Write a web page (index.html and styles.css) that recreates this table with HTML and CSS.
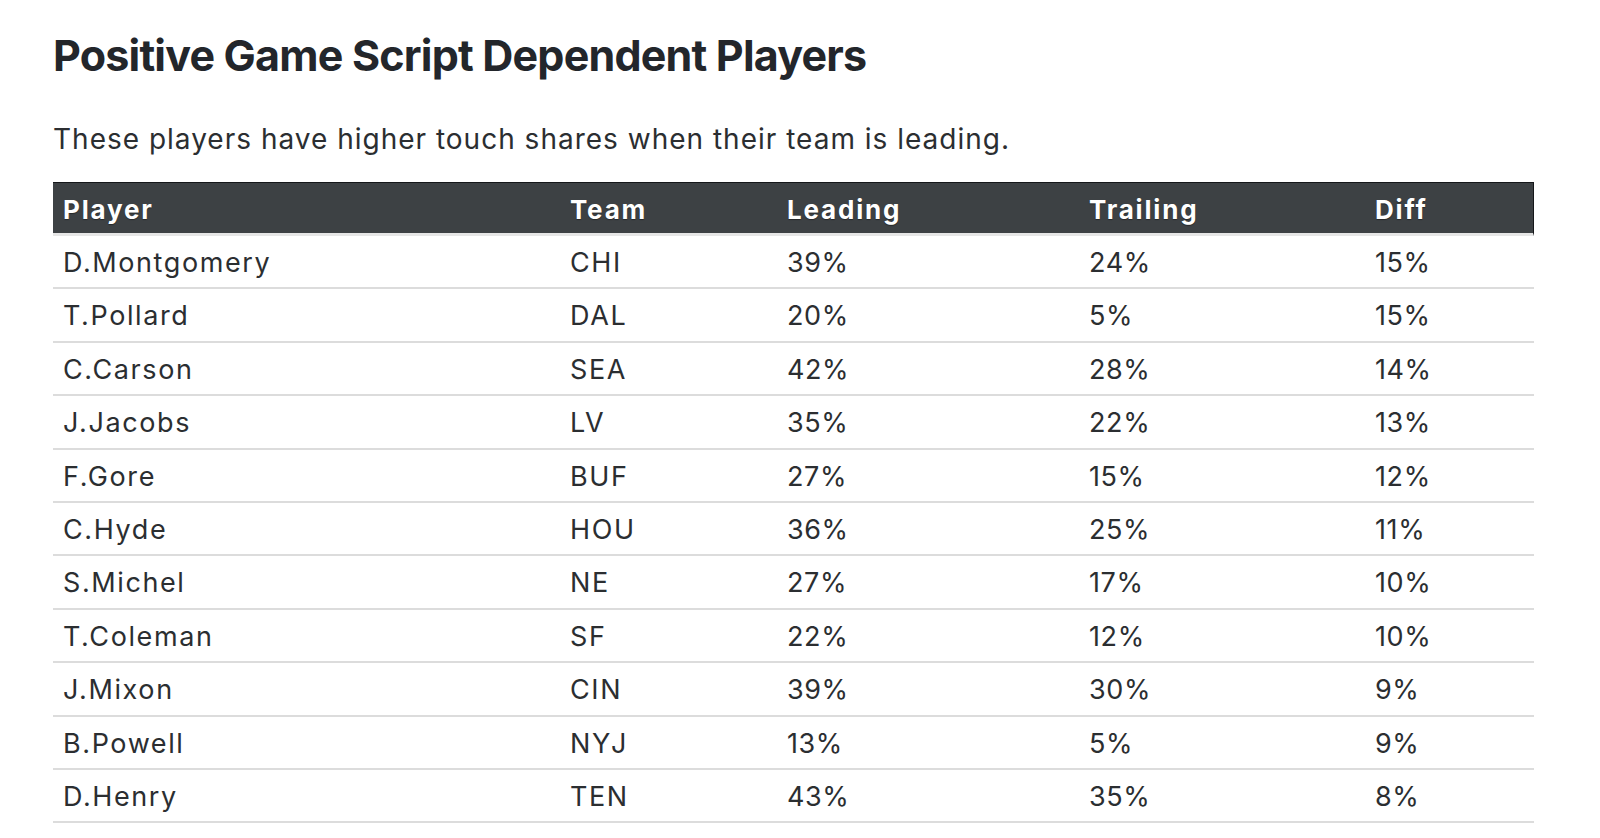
FILE: index.html
```html
<!DOCTYPE html>
<html lang="en">
<head>
<meta charset="utf-8">
<title>Positive Game Script Dependent Players</title>
<link rel="stylesheet" href="styles.css">
</head>
<body>
<main class="article">
  <h1 class="title">Positive Game Script Dependent Players</h1>
  <p class="lede">These players have higher touch shares when their team is leading.</p>
  <table class="stats">
    <colgroup>
      <col class="c-player"><col class="c-team"><col class="c-lead"><col class="c-trail"><col class="c-diff">
    </colgroup>
    <thead>
      <tr><th>Player</th><th>Team</th><th>Leading</th><th>Trailing</th><th>Diff</th></tr>
    </thead>
    <tbody>
      <tr><td class="name">D.Montgomery</td><td class="name">CHI</td><td>39%</td><td>24%</td><td>15%</td></tr>
      <tr><td class="name">T.Pollard</td><td class="name">DAL</td><td>20%</td><td>5%</td><td>15%</td></tr>
      <tr><td class="name">C.Carson</td><td class="name">SEA</td><td>42%</td><td>28%</td><td>14%</td></tr>
      <tr><td class="name">J.Jacobs</td><td class="name">LV</td><td>35%</td><td>22%</td><td>13%</td></tr>
      <tr><td class="name">F.Gore</td><td class="name">BUF</td><td>27%</td><td>15%</td><td>12%</td></tr>
      <tr><td class="name">C.Hyde</td><td class="name">HOU</td><td>36%</td><td>25%</td><td>11%</td></tr>
      <tr><td class="name">S.Michel</td><td class="name">NE</td><td>27%</td><td>17%</td><td>10%</td></tr>
      <tr><td class="name">T.Coleman</td><td class="name">SF</td><td>22%</td><td>12%</td><td>10%</td></tr>
      <tr><td class="name">J.Mixon</td><td class="name">CIN</td><td>39%</td><td>30%</td><td>9%</td></tr>
      <tr><td class="name">B.Powell</td><td class="name">NYJ</td><td>13%</td><td>5%</td><td>9%</td></tr>
      <tr><td class="name">D.Henry</td><td class="name">TEN</td><td>43%</td><td>35%</td><td>8%</td></tr>
    </tbody>
  </table>
</main>
</body>
</html>
```

FILE: styles.css
```css
html, body {
  margin: 0;
  padding: 0;
  background: #ffffff;
}

body {
  font-family: "Inter", "Lato", sans-serif;
  color: #2b2e31;
}

.article {
  padding: 30px 0 0 53px;
  width: 1481px;
}

.title {
  margin: 0;
  font-size: 43px;
  line-height: 50px;
  font-weight: 700;
  letter-spacing: -0.8px;
  color: #23262b;
}

.lede {
  margin: 42px 0 0 0;
  font-size: 28px;
  line-height: 34px;
  letter-spacing: 1px;
  color: #2b2e31;
}

.stats {
  margin-top: 26px;
  width: 1481px;
  border-collapse: separate;
  border-spacing: 0;
  table-layout: fixed;
  font-size: 27px;
}

.c-player { width: 507px; }
.c-team { width: 217px; }
.c-lead { width: 302px; }
.c-trail { width: 286px; }
.c-diff { width: 169px; }

.stats th {
  padding: 3px 10px 0;
  line-height: 47px;
  text-align: left;
  font-size: 26px;
  font-weight: 700;
  letter-spacing: 1.8px;
  color: #ffffff;
  background: #3d4144;
  border-top: 1px solid #15171a;
  border-bottom: 3px solid #e6e6e6;
  text-shadow: 0 1px 1px rgba(0, 0, 0, 0.4);
}

.stats th:last-child {
  border-right: 1px solid #15171a;
}

.stats td {
  padding: 3px 10px 0;
  line-height: 48.4px;
  letter-spacing: 0.6px;
  border-bottom: 2px solid #dcdcdc;
}

.stats td.name {
  letter-spacing: 1.6px;
}
```
